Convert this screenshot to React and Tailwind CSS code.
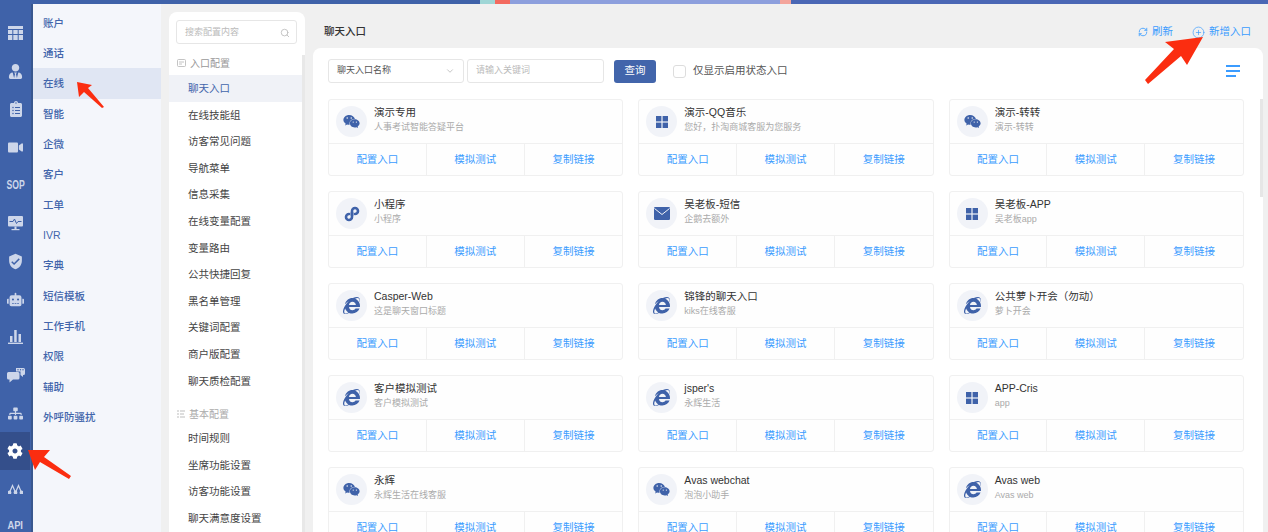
import { Search, ChevronDown, RefreshCw, CirclePlus } from "lucide-react";
import { FaUserTie, FaClipboardList, FaVideo, FaRobot, FaSitemap, FaCog, FaInternetExplorer, FaWeixin } from "react-icons/fa";
import { MdVerifiedUser } from "react-icons/md";

const font = { fontFamily: '"Liberation Sans", "Noto Sans CJK SC", sans-serif' };

function TableIcon() {
  return (
    <svg width="15" height="14" viewBox="0 0 15 14" fill="currentColor">
      <rect x="0" y="0" width="15" height="3" />
      <rect x="0" y="4" width="4.3" height="4" />
      <rect x="5.3" y="4" width="4.4" height="4" />
      <rect x="10.7" y="4" width="4.3" height="4" />
      <rect x="0" y="9" width="4.3" height="5" />
      <rect x="5.3" y="9" width="4.4" height="5" />
      <rect x="10.7" y="9" width="4.3" height="5" />
    </svg>
  );
}

function MonitorIcon() {
  return (
    <svg width="15" height="15" viewBox="0 0 15 15">
      <rect x="0" y="0" width="15" height="10.5" rx="1" fill="currentColor" />
      <rect x="6.5" y="10.5" width="2" height="2.5" fill="currentColor" />
      <rect x="3.5" y="13" width="8" height="1.2" fill="currentColor" />
      <polyline points="1.5,5.5 5,5.5 6.5,3 8.5,7.5 10,5.5 13.5,5.5" fill="none" stroke="#3f62a9" strokeWidth="1" />
    </svg>
  );
}

function BarsIcon() {
  return (
    <svg width="15" height="14" viewBox="0 0 15 14" fill="currentColor">
      <rect x="2" y="6" width="2.5" height="6" />
      <rect x="6.2" y="0" width="2.5" height="12" />
      <rect x="10.5" y="4" width="2.5" height="8" />
      <rect x="0" y="12.6" width="15" height="1.4" />
    </svg>
  );
}

function ChatIcon() {
  return (
    <svg width="18" height="15" viewBox="0 0 18 15" fill="currentColor">
      <path d="M1.5 4H11a1.5 1.5 0 0 1 1.5 1.5V10A1.5 1.5 0 0 1 11 11.500H6L2.500 14.500V11.500H1.500A1.500 1.500 0 0 1 0 10V5.500A1.500 1.500 0 0 1 1.500 4Z" />
      <path d="M9 0H16.500A1.500 1.500 0 0 1 18 1.500V5.500A1.500 1.500 0 0 1 16.500 7H16V9L13.500 7V3.500H9Z" />
      <circle cx="11" cy="1.800" r="0.700" fill="#3f62a9" />
      <circle cx="13.500" cy="1.800" r="0.700" fill="#3f62a9" />
      <circle cx="16" cy="1.800" r="0.700" fill="#3f62a9" />
    </svg>
  );
}

function PeaksIcon() {
  return (
    <svg width="15" height="10" viewBox="0 0 15 10" fill="none" stroke="currentColor" strokeWidth="1.200">
      <polyline points="1.500,8.500 4.500,1.500 7.500,8.500 10.500,1.500 13.500,8.500" />
      <circle cx="1.500" cy="8.500" r="1.300" fill="currentColor" />
      <circle cx="7.500" cy="8.500" r="1.300" fill="currentColor" />
      <circle cx="13.500" cy="8.500" r="1.300" fill="currentColor" />
    </svg>
  );
}

function GridIcon() {
  return (
    <svg width="12" height="12" viewBox="0 0 12 12" fill="currentColor">
      <rect x="0" y="0" width="5.400" height="5.400" />
      <rect x="6.600" y="0" width="5.400" height="5.400" />
      <rect x="0" y="6.600" width="5.400" height="5.400" />
      <rect x="6.600" y="6.600" width="5.400" height="5.400" />
    </svg>
  );
}

function MiniProgramIcon() {
  return (
    <svg width="16" height="16" viewBox="0 0 16 16" fill="none" stroke="currentColor" strokeWidth="2.600" strokeLinecap="round">
      <path d="M8 6.500V11a3 3 0 1 1-3-3" />
      <path d="M8 9.500V5a3 3 0 1 1 3 3" />
    </svg>
  );
}

function MailIcon() {
  return (
    <svg width="16" height="13" viewBox="0 0 16 13">
      <rect x="0" y="0" width="16" height="13" rx="1.200" fill="currentColor" />
      <polyline points="0.500,1.500 8,7.500 15.500,1.500" fill="none" stroke="#f1f3f8" strokeWidth="1" />
    </svg>
  );
}

function BoxLinesIcon() {
  return (
    <svg width="9" height="8" viewBox="0 0 9 8" fill="none" stroke="#b5b5b5" strokeWidth="0.800">
      <rect x="0.500" y="0.500" width="8" height="7" rx="1" />
      <line x1="2" y1="3" x2="7" y2="3" />
      <line x1="2" y1="5" x2="5" y2="5" />
    </svg>
  );
}

function ListLinesIcon() {
  return (
    <svg width="8" height="8" viewBox="0 0 8 8" fill="none" stroke="#b5b5b5" strokeWidth="0.900">
      <line x1="0" y1="1" x2="2" y2="1" />
      <line x1="3" y1="1" x2="8" y2="1" />
      <line x1="0" y1="4" x2="2" y2="4" />
      <line x1="3" y1="4" x2="7" y2="4" />
      <line x1="0" y1="7" x2="2" y2="7" />
      <line x1="3" y1="7" x2="8" y2="7" />
    </svg>
  );
}

const railIcons = [
  <TableIcon />,
  <FaUserTie size={15} />,
  <FaClipboardList size={16} />,
  <FaVideo size={15} />,
  <span className="inline-block text-[12px] font-bold scale-x-[0.72]">SOP</span>,
  <MonitorIcon />,
  <MdVerifiedUser size={17} />,
  <FaRobot size={17} />,
  <BarsIcon />,
  <ChatIcon />,
  <FaSitemap size={15} />,
];

const categories = ["账户", "通话", "在线", "智能", "企微", "客户", "工单", "IVR", "字典", "短信模板", "工作手机", "权限", "辅助", "外呼防骚扰"];
const group1 = ["聊天入口", "在线技能组", "访客常见问题", "导航菜单", "信息采集", "在线变量配置", "变量路由", "公共快捷回复", "黑名单管理", "关键词配置", "商户版配置", "聊天质检配置"];
const group2 = ["时间规则", "坐席功能设置", "访客功能设置", "聊天满意度设置"];

const cards = [
  ["wx", "演示专用", "人事考试智能答疑平台"],
  ["grid", "演示-QQ音乐", "您好，扑淘商城客服为您服务"],
  ["wx", "演示-转转", "演示-转转"],
  ["link", "小程序", "小程序"],
  ["mail", "吴老板-短信", "企鹅去额外"],
  ["grid", "吴老板-APP", "吴老板app"],
  ["ie", "Casper-Web", "这是聊天窗口标题"],
  ["ie", "锦锋的聊天入口", "kiks在线客服"],
  ["ie", "公共萝卜开会（勿动）", "萝卜开会"],
  ["ie", "客户模拟测试", "客户模拟测试"],
  ["ie", "jsper's", "永辉生活"],
  ["grid", "APP-Cris", "app"],
  ["wx", "永辉", "永辉生活在线客服"],
  ["wx", "Avas webchat", "泡泡小助手"],
  ["ie", "Avas web", "Avas web"],
];

function CardIcon({ type }) {
  if (type === "wx") return <FaWeixin size={17} />;
  if (type === "grid") return <GridIcon />;
  if (type === "link") return <MiniProgramIcon />;
  if (type === "mail") return <MailIcon />;
  return <FaInternetExplorer size={17} />;
}

function Card({ icon, title, desc }) {
  return (
    <div className="h-[77px] border border-[#f0f0f0] rounded-[3px] bg-[#fefefe] overflow-hidden">
      <div className="h-[44px] flex items-center pl-[7px] border-b border-[#f0f0f0]">
        <div className="w-[31px] h-[31px] rounded-full bg-[#f1f3f8] flex items-center justify-center text-[#3f62a9] shrink-0">
          <CardIcon type={icon} />
        </div>
        <div className="ml-[7px] -mt-[5px]">
          <div className="text-[10.5px] leading-[15px] text-[#333]">{title}</div>
          <div className="text-[9px] leading-[14px] text-[#aaa]">{desc}</div>
        </div>
      </div>
      <div className="h-[32px] grid grid-cols-3 text-[10.5px] text-[#3b9cff] text-center leading-[30px]">
        <div className="border-r border-[#f0f0f0]">配置入口</div>
        <div className="border-r border-[#f0f0f0]">模拟测试</div>
        <div>复制链接</div>
      </div>
    </div>
  );
}

export default function App() {
  return (
    <div style={font} className="relative w-[1268px] h-[532px] overflow-hidden flex flex-col bg-[#f0f0f0]">
      {/* top banner */}
      <div className="h-[4px] shrink-0 flex">
        <div className="w-[480px] bg-[#3f62a9]" />
        <div className="w-[15px] bg-[#9fd6d6]" />
        <div className="w-[15px] bg-[#f36a5f]" />
        <div className="w-[270px] bg-[#8d9fdd]" />
        <div className="w-[11px] bg-[#f4a59c]" />
        <div className="flex-1 bg-[#4a67b5]" />
      </div>
      <div className="flex flex-1 min-h-0">
        {/* icon rail */}
        <div className="w-[33px] shrink-0 bg-[#3f62a9] flex flex-col items-center text-[#cdd6ea] border-r-2 border-[#38578f] pt-[10px]">
          {railIcons.map((icon, i) => (
            <div key={i} className="h-[38px] shrink-0 flex items-center justify-center w-full">
              {icon}
            </div>
          ))}
          <div className="h-[38px] shrink-0 w-[30px] self-start bg-[#344f8b] flex items-center justify-center text-white">
            <FaCog size={16} />
          </div>
          <div className="h-[38px] shrink-0 flex items-center justify-center">
            <PeaksIcon />
          </div>
          <div className="h-[34px] shrink-0 flex items-center justify-center">
            <span className="inline-block text-[11px] leading-[12px] font-bold scale-x-[0.85]">API</span>
          </div>
        </div>

        {/* category column */}
        <div className="w-[128px] shrink-0 bg-[#f4f6fb] pt-[3.5px]">
          {categories.map((c) => (
            <div key={c} className={`h-[30.35px] leading-[30px] pl-[10px] text-[10.5px] font-medium text-[#4265ab] ${c === "在线" ? "bg-[#e0e6f3]" : ""}`}>
              {c}
            </div>
          ))}
        </div>

        {/* config menu */}
        <div className="relative ml-[8px] w-[136px] shrink-0 bg-white rounded-t-[8px] mt-[8px] flex flex-col">
          <div className="absolute right-0 top-[43px] bottom-0 w-[3px] bg-[#e8e8e8]" />
          <div className="mx-[7px] mt-[8px] h-[24px] w-[121px] border border-[#e6e6e6] rounded-[3px] flex items-center justify-between pl-[8px] pr-[6px] pt-[1px] text-[#bbb] text-[9px]">
            搜索配置内容
            <Search size={10} />
          </div>
          <div className="mt-[10px] mr-[3px] flex flex-col">
            <div className="h-[18px] mb-[3px] flex items-center gap-[4px] pl-[8px] text-[10px] text-[#999]">
              <BoxLinesIcon />
              入口配置
            </div>
            {group1.map((g) => (
              <div key={g} className={`h-[26.6px] leading-[26px] pl-[19px] text-[10.5px] ${g === "聊天入口" ? "bg-[#f0f2f7] text-[#4265ab]" : "text-[#444]"}`}>
                {g}
              </div>
            ))}
            <div className="mt-[11px] h-[18px] mb-[2px] flex items-center gap-[4px] pl-[8px] text-[10px] text-[#aaa]">
              <ListLinesIcon />
              基本配置
            </div>
            {group2.map((g) => (
              <div key={g} className="h-[26.6px] leading-[26px] pl-[19px] text-[10.5px] text-[#444]">{g}</div>
            ))}
          </div>
        </div>

        {/* main */}
        <div className="flex-1 min-w-0 ml-[8px] flex flex-col">
          <div className="h-[44px] shrink-0 flex items-center justify-between pt-[12px] pl-[11px] pr-[17px]">
            <div className="text-[10.5px] font-medium text-[#333] -mt-[1px]">聊天入口</div>
            <div className="flex items-center text-[10.5px] text-[#3b9cff]">
              <RefreshCw size={10} className="mr-[4px]" />
              刷新
              <CirclePlus size={13} strokeWidth={1.25} className="ml-[19px] mr-[4px]" />
              新增入口
            </div>
          </div>
          <div className="relative flex-1 min-h-0 bg-white rounded-t-[8px] mr-[5px] pl-[15px] pr-[19px]">
            <div className="absolute right-0 top-[51px] h-[98px] w-[3px] bg-[#e6e6e6]" />
            <div className="h-[46px] mb-[5px] flex items-center text-[9px]">
              <div className="w-[136px] h-[24px] border border-[#e6e6e6] rounded-[3px] flex items-center justify-between px-[8px] text-[#555]">
                聊天入口名称
                <ChevronDown size={10} className="text-[#bbb]" />
              </div>
              <div className="ml-[3px] w-[137px] h-[24px] border border-[#e6e6e6] rounded-[3px] flex items-center pl-[8px] text-[#bbb]">请输入关键词</div>
              <div className="ml-[10px] w-[42px] h-[23px] bg-[#4265ab] rounded-[3px] text-white text-[10.5px] flex items-center justify-center">查询</div>
              <div className="ml-[17px] w-[13px] h-[13px] border border-[#ddd] rounded-[3px]" />
              <div className="ml-[7px] text-[10.5px] text-[#555]">仅显示启用状态入口</div>
              <div className="ml-auto mr-[4px] w-[14px] flex flex-col gap-[3.5px]">
                <div className="h-[1.5px] bg-[#3b9cff]" />
                <div className="h-[1.5px] bg-[#3b9cff]" />
                <div className="h-[1.5px] w-[10px] bg-[#3b9cff]" />
              </div>
            </div>
            <div className="grid grid-cols-3 gap-x-[15px] gap-y-[15px]">
              {cards.map(([icon, title, desc]) => (
                <Card key={title} icon={icon} title={title} desc={desc} />
              ))}
            </div>
          </div>
        </div>
      </div>

      {/* annotation arrows */}
      <svg className="absolute left-0 top-0 pointer-events-none" width="1268" height="532">
        <polygon points="77,82 92,85 88,88 104,107 102,108 84,92 79,97" fill="#fb2d10" />
        <polygon points="28,450 50,450 44,457 71,476 69,479 40,462 35,470" fill="#fb2d10" />
        <polygon points="1203,37 1187,65 1181,56 1148,84 1145,80 1174,49 1165,42" fill="#fb2d10" />
      </svg>
    </div>
  );
}
